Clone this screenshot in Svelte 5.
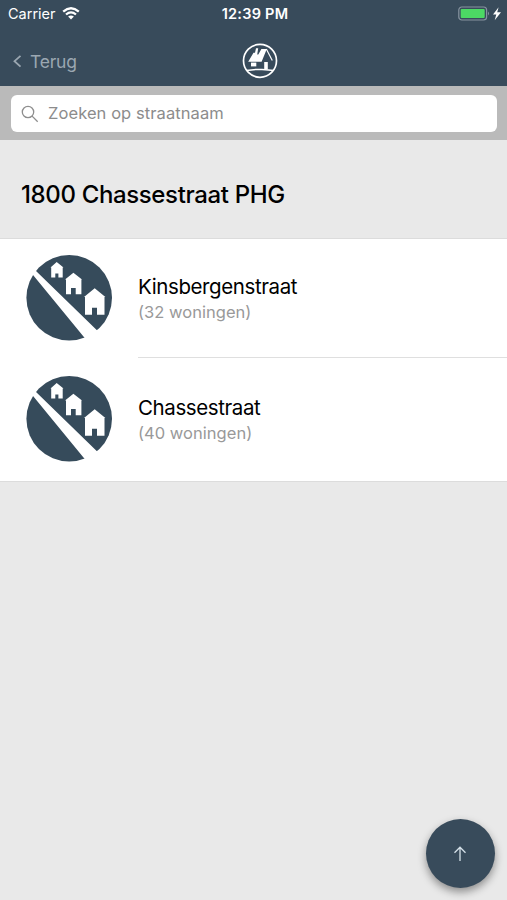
<script>

    let title = $state("1800 Chassestraat PHG");

    let query = $state("");

    let streets = $state([
        { name: "Kinsbergenstraat", count: 32 },
        { name: "Chassestraat", count: 40 }
    ]);

    let visible = $derived(
        streets.filter(s =>
            s.name.toLowerCase().includes(query.toLowerCase())
        )
    );

    function toTop() {
        window.scrollTo({ top: 0, behavior: "smooth" });
    }

</script>

<div class="root">

    <header>

        <!-- STATUS BAR -->

        <div class="status">
            <div class="carrier">
                <span>Carrier</span>
                <svg width="18" height="13" viewBox="0 0 18 13">
                    <path d="M1.2 4.6Q9-2.2 16.8 4.6M4 7.5Q9 3.2 14 7.5" fill="none" stroke="#fff" stroke-width="2.3" />
                    <path d="M9 12.5L6.1 9.6Q9 7.3 11.9 9.6Z" fill="#fff" />
                </svg>
            </div>
            <div class="clock">12:39 PM</div>
            <div class="power">
                <svg width="44" height="16" viewBox="0 0 44 16">
                    <rect x=".8" y="1" width="27.8" height="13" rx="3" fill="none" stroke="#8794a0" stroke-width="1.2" />
                    <rect x="2.7" y="3" width="24" height="9" rx="1" fill="#4cd964" />
                    <path d="M30 5.5Q32 7.5 30 9.5Z" fill="#8794a0" />
                    <path d="M40.6 1.2L35 8.5H38.3L36.7 14.2L43 6.2H39.2Z" fill="#fff" />
                </svg>
            </div>
        </div>

        <!-- NAVIGATION -->

        <nav>
            <button class="back">
                <svg width="10" height="14" viewBox="0 0 10 14">
                    <path d="M8.5 .8L2.5 6.2L8.5 11.6" fill="none" stroke="currentColor" stroke-width="1.8" />
                </svg>
                <span>Terug</span>
            </button>
            <svg class="logo" width="36" height="36" viewBox="0 0 36 36">
                <circle cx="18" cy="17.8" r="16.5" fill="none" stroke="#fff" stroke-width="1.7" />
                <path d="M6.2 18.8L11.5 9.8H13L14 5.2H16.2L15.2 11.5H16.3L19.4 6H24.8L19.6 18.8Z" fill="#fff" />
                <path d="M9 19.6H14.3V23.4H9Z" fill="#fff" />
                <path d="M24.3 6L30.3 17.5" stroke="#fff" stroke-width="1.2" />
                <path d="M22.2 19H25.8V26.5H22.2Z" fill="#fff" />
                <path d="M4.5 27.6Q13 26 20 26.5T31.5 27.4" fill="none" stroke="#fff" stroke-width="1.5" />
            </svg>
        </nav>

    </header>

    <!-- SEARCH -->

    <div class="search">
        <label class="field">
            <svg width="18" height="18" viewBox="0 0 18 18">
                <circle cx="7" cy="7" r="5.7" />
                <path d="M11.1 11.1L16.7 16.7" />
            </svg>
            <input bind:value={query} placeholder="Zoeken op straatnaam" />
        </label>
    </div>

    <h1>{title}</h1>

    <!-- STREETS -->

    <ul>
        {#each visible as street (street.name)}
            <li>
                <svg class="avatar" width="86" height="86" viewBox="0 0 86 86">
                    <circle cx="43.2" cy="42.8" r="42.8" fill="#364b5b" />
                    <path d="M9 15L6 18.7L58.3 82.5L62 86L76 80L71.2 75.5Z" fill="#fff" />
                    <path d="M30.7 7L37.5 12.4H36.7V22.6H32.4V18.6H29.3V22.6H25.2V12.4H24.5Z" fill="#fff" />
                    <path d="M47.4 17.7L56 24.5H55.4V39.2H49.7V33H45V39.2H40V24.5H39Z" fill="#fff" />
                    <path d="M68.7 33.3L79.4 42H78.5V59.8H71V52.7H66V59.8H59V42H58Z" fill="#fff" />
                </svg>
                <div class="info">
                    <div class="name">{street.name}</div>
                    <div class="count">({street.count} woningen)</div>
                </div>
            </li>
        {/each}
    </ul>

    <button class="top" aria-label="Naar boven" onclick={toTop}>
        <svg width="14" height="16" viewBox="0 0 14 16">
            <path d="M7 15V1.2M1.5 6.7L7 1.2L12.5 6.7" fill="none" stroke="currentColor" stroke-width="1.3" />
        </svg>
    </button>

</div>

<style>

:global(body){
    background:#e9e9e9;
}

.root{
    position:relative;
    height:900px;
    overflow:hidden;
    background:#e9e9e9;
    color:#000;
    font-family:Inter, "Liberation Sans", sans-serif;
}

header{
    height:86px;
    background:#384b5b;
    color:#fff;
}

.status{
    display:grid;
    grid-template-columns:1fr auto 1fr;
    align-items:center;
    height:27px;
    padding:0 5px 0 8px;
    font-size:14.5px;
}

.carrier{
    display:flex;
    align-items:center;
    gap:6px;
}

.clock{
    font-weight:600;
    letter-spacing:.25px;
}

.power{
    display:flex;
    justify-content:flex-end;
}

nav{
    display:grid;
    grid-template-columns:1fr auto 1fr;
    align-items:center;
    height:59px;
    padding:9px 12px 0;
    box-sizing:border-box;
}

.logo{
    margin-left:13px;
}

.back{
    display:flex;
    align-items:center;
    gap:8px;
    padding:1px 0 0;
    border:none;
    background:none;
    color:#9ba7b1;
    font:17.5px Inter, sans-serif;
    letter-spacing:-.2px;
}

.search{
    height:54px;
    padding:9px 10px 8px 11px;
    box-sizing:border-box;
    background:#bababa;
}

.field{
    display:flex;
    align-items:center;
    gap:9px;
    height:37px;
    padding:0 10px;
    border-radius:6px;
    background:#fff;
}

.field svg{
    fill:none;
    stroke:#8e8e8e;
    stroke-width:1.3;
}

input{
    flex:1;
    min-width:0;
    padding:0 0 1px;
    border:none;
    outline:none;
    background:none;
    font:16.5px Inter, sans-serif;
    letter-spacing:.08px;
}

input::placeholder{
    color:#8c8c8c;
    opacity:1;
}

h1{
    height:99px;
    margin:0;
    padding:0 21px;
    box-sizing:border-box;
    border-bottom:1px solid #dcdcdc;
    font-size:24px;
    font-weight:500;
    line-height:109px;
    letter-spacing:-.36px;
}

ul{
    margin:0;
    padding:0;
    list-style:none;
    background:#fff;
    border-bottom:1px solid #dcdcdc;
}

li{
    display:flex;
    gap:26px;
    height:121px;
    padding-left:26px;
}

.avatar{
    flex:none;
    margin-top:16px;
}

.info{
    flex:1;
    padding-top:35px;
    box-sizing:border-box;
    height:119px;
    border-bottom:1px solid #dfdfdf;
}

li:last-child .info{
    border-bottom:none;
}

.name{
    font-size:20.5px;
    line-height:26px;
    letter-spacing:-.4px;
}

.count{
    color:#999;
    font-size:16.5px;
    line-height:25px;
    letter-spacing:.03px;
}

.top{
    position:absolute;
    right:12px;
    bottom:12px;
    display:flex;
    align-items:center;
    justify-content:center;
    width:69px;
    height:69px;
    padding:0 1px 0 0;
    border:none;
    border-radius:50%;
    background:#384b5b;
    color:#d5e0e8;
    box-shadow:0 4px 8px rgba(0,0,0,.4);
}

</style>
